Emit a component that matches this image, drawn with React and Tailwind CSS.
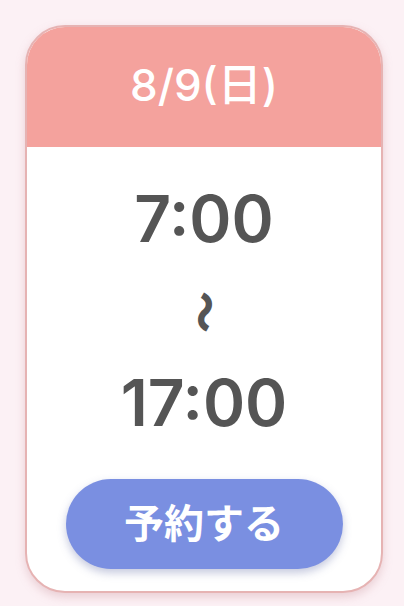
import React from 'react';

const font = { fontFamily: 'Inter, "Noto Sans CJK JP", "Noto Sans", sans-serif' };

export default function App() {
  return (
    <div className="min-h-screen w-full bg-[#fcf1f5] px-[25px] pt-[25px]" style={font}>
      <div className="flex h-[568px] w-[358px] flex-col overflow-hidden rounded-[40px] border-2 border-[#e6b3b3] bg-white shadow-[0_4px_10px_rgba(200,140,150,0.35)]">
        {/* date header */}
        <div className="flex h-[120px] shrink-0 items-center justify-center bg-[#f4a29d] pb-[4px]">
          <span className="text-[44px] font-medium leading-none text-white">8/9(日)</span>
        </div>

        {/* time range */}
        <div className="flex flex-1 flex-col items-center pt-[40px] text-[#555555]">
          <span className="text-[64px] font-semibold leading-none">7:00</span>
          <span className="mt-[40px] inline-block rotate-90 text-[42px] font-black leading-none">〜</span>
          <span className="mt-[38px] text-[64px] font-semibold leading-none">17:00</span>

          <button className="mt-auto mb-[22px] flex h-[90px] w-[277px] items-center justify-center rounded-full bg-[#7a8fe1] text-[40px] font-bold text-white shadow-[0_4px_8px_rgba(90,100,160,0.35)]">
            予約する
          </button>
        </div>
      </div>
    </div>
  );
}
